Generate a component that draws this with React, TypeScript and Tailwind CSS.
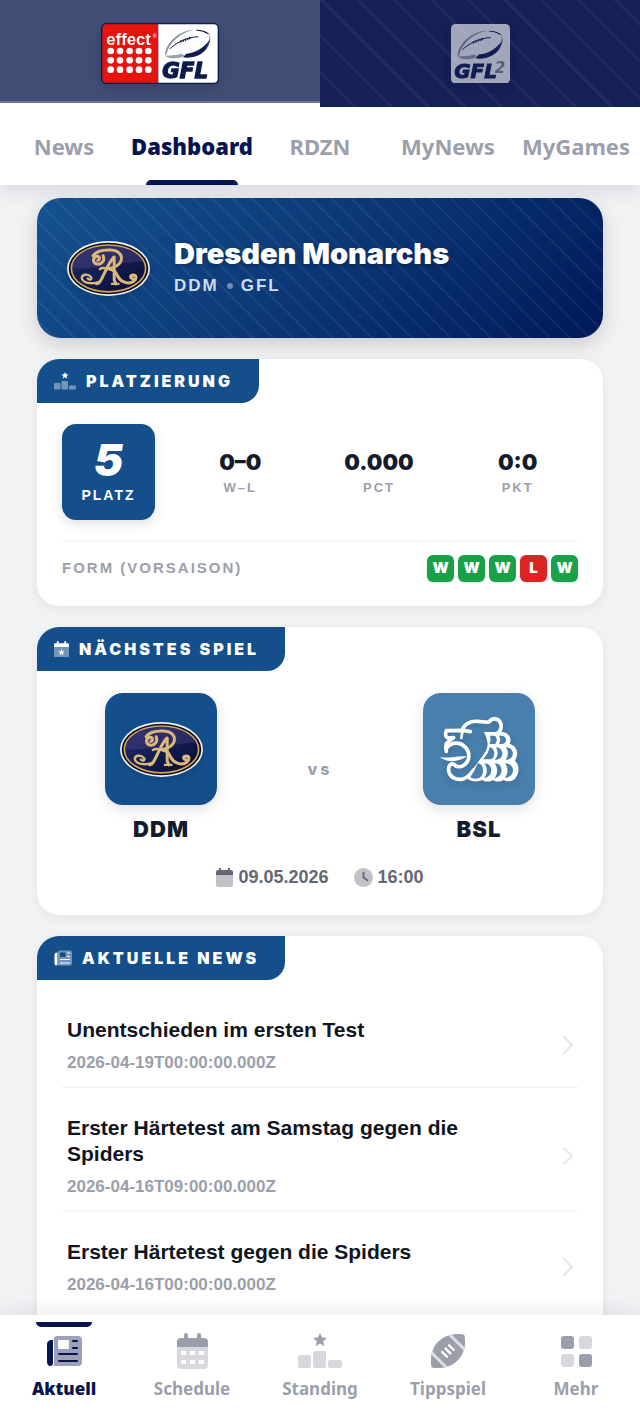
import type { ReactNode } from "react";

const tabs = ["News", "Dashboard", "RDZN", "MyNews", "MyGames"];

const stats = [
  { value: "0–0", label: "W–L" },
  { value: "0.000", label: "PCT" },
  { value: "0:0", label: "PKT" },
];

const form = ["W", "W", "W", "L", "W"];

const news = [
  { title: "Unentschieden im ersten Test", date: "2026-04-19T00:00:00.000Z" },
  { title: "Erster Härtetest am Samstag gegen die Spiders", date: "2026-04-16T09:00:00.000Z" },
  { title: "Erster Härtetest gegen die Spiders", date: "2026-04-16T00:00:00.000Z" },
];

const STAR = "M0 -7 L2 -2.4 L7 -2 L3.2 1.3 L4.4 6.2 L0 3.5 L-4.4 6.2 L-3.2 1.3 L-7 -2 L-2 -2.4 Z";

function PodiumIcon({ className }: { className: string }) {
  return (
    <svg viewBox="0 0 44 36" className={className} fill="currentColor" aria-hidden="true">
      <path d={STAR} transform="translate(22 7)" />
      <g opacity="0.4">
        <rect x="0" y="22" width="13" height="13" rx="2" />
        <rect x="15" y="18" width="13" height="17" rx="2" />
        <rect x="30" y="27" width="14" height="8" rx="2" />
      </g>
    </svg>
  );
}

function NewspaperIcon({ className }: { className: string }) {
  return (
    <svg viewBox="0 0 36 32" className={className} fill="currentColor" aria-hidden="true">
      <path d="M7 5 C2 5 1 7 1 10 V27 C1 32 7 32 7 28 Z" />
      <path
        fillRule="evenodd"
        opacity="0.4"
        d="M11 1 H32 Q36 1 36 5 V27 Q36 31 32 31 H7 Q8 30 8 28 V4 Q8 1 11 1 Z M13 5 Q12 5 12 6 V13 Q12 14 13 14 H22 Q23 14 23 13 V6 Q23 5 22 5 Z"
      />
      <path
        d="M27 6 H31 M27 13 H31 M13 19 H31 M13 26 H31"
        stroke="currentColor"
        strokeWidth="2"
        strokeLinecap="round"
      />
    </svg>
  );
}

function CalendarIcon({ className }: { className: string }) {
  return (
    <svg viewBox="0 0 31 36" className={className} fill="currentColor" aria-hidden="true">
      <path d="M9 0 Q11 0 11 2 V5 H20 V2 Q20 0 22 0 Q24 0 24 2 V5 H27 Q31 5 31 9 V14 H0 V9 Q0 5 4 5 H7 V2 Q7 0 9 0 Z" />
      <path
        fillRule="evenodd"
        opacity="0.4"
        d="M0 14 H31 V32 Q31 36 27 36 H4 Q0 36 0 32 Z M4 18 V22 H9 V18 Z M13 18 V22 H18 V18 Z M22 18 V22 H27 V18 Z M4 27 V31 H9 V27 Z M13 27 V31 H18 V27 Z M22 27 V31 H27 V27 Z"
      />
    </svg>
  );
}

function MatchdayIcon({ className }: { className: string }) {
  return (
    <svg viewBox="0 0 32 36" className={className} fill="currentColor" aria-hidden="true">
      <path d="M8 0 Q10 0 10 2 V5 H22 V2 Q22 0 24 0 Q26 0 26 2 V5 H29 Q32 5 32 8 V13 H0 V8 Q0 5 3 5 H6 V2 Q6 0 8 0 Z" />
      <path opacity="0.4" d="M0 13 H32 V33 Q32 36 29 36 H3 Q0 36 0 33 Z" />
      <path d={STAR} transform="translate(16 24)" />
    </svg>
  );
}

function DateIcon({ className }: { className: string }) {
  return (
    <svg viewBox="0 0 17 19" className={className} fill="currentColor" aria-hidden="true">
      <path d="M3 0 H5 V2 H12 V0 H14 V2 H15 Q17 2 17 4 V7 H0 V4 Q0 2 2 2 H3 Z" />
      <path opacity="0.4" d="M0 7 H17 V17 Q17 19 15 19 H2 Q0 19 0 17 Z" />
    </svg>
  );
}

function ClockIcon({ className }: { className: string }) {
  return (
    <svg viewBox="0 0 20 20" className={className} aria-hidden="true">
      <circle cx="10" cy="10" r="10" fill="currentColor" opacity="0.4" />
      <path d="M10 5 V10 L14 13" fill="none" stroke="currentColor" strokeWidth="2" strokeLinecap="round" />
    </svg>
  );
}

function FootballIcon({ className }: { className: string }) {
  return (
    <svg viewBox="0 0 100 100" className={className} aria-hidden="true">
      <clipPath id="ball">
        <path d="M6 99 Q1 99 1 94 C-4 62 6 36 24 20 C42 3 68 -3 93 1 Q98 1 99 6 C104 38 94 64 76 80 C58 97 32 103 6 99 Z" />
      </clipPath>
      <g clipPath="url(#ball)">
        <rect width="100" height="100" fill="currentColor" />
        <path d="M50 -3 L103 50 M-3 50 L50 103" stroke="#dcdee3" strokeWidth="9" />
      </g>
      <path
        d="M53 33 L67 47 M43 43 L57 57 M33 53 L47 67"
        stroke="white"
        strokeWidth="7"
        strokeLinecap="round"
      />
    </svg>
  );
}

function GridIcon({ className }: { className: string }) {
  return (
    <svg viewBox="0 0 31 31" className={className} fill="currentColor" aria-hidden="true">
      <rect width="13" height="13" rx="3" />
      <rect x="18" y="18" width="13" height="13" rx="3" />
      <g opacity="0.4">
        <rect x="18" width="13" height="13" rx="3" />
        <rect y="18" width="13" height="13" rx="3" />
      </g>
    </svg>
  );
}

function LeagueBall() {
  return (
    <g fill="none">
      <path d="M192 97 C192 60 236 20 282 20 C240 26 202 62 197 94 Z" fill="#8d949f" />
      <path d="M192 98 C208 97 226 97 243 92 L250 98 L242 103 C222 108 202 107 192 98 Z" fill="#9aa1aa" />
      <path d="M246 103 L256 92 C284 90 310 74 328 48 C324 78 302 98 272 103 C262 105 254 105 246 103 Z" fill="#0d1b4f" />
      <path d="M286 20 C304 20 318 25 327 35 L318 32 C308 26 298 23 286 23 Z" fill="#0d1b4f" />
      <path d="M326 38 C328 48 324 60 314 74" stroke="#59627f" strokeWidth="2" />
      <path d="M206 78 C222 62 256 42 292 41" stroke="#0d1b4f" strokeWidth="3" />
      <path d="M238 56 L270 44" stroke="#0d1b4f" strokeWidth="7" strokeDasharray="4 3" />
    </g>
  );
}

function GflLogo() {
  return (
    <svg viewBox="0 0 354 183" className="w-[118px] drop-shadow-lg" role="img" aria-label="effect GFL">
      <rect width="354" height="183" rx="16" fill="#0d1b4f" />
      <path d="M16 4 H172 V179 H16 Q4 179 4 167 V16 Q4 4 16 4 Z" fill="#e6130f" />
      <path d="M172 4 H338 Q350 4 350 16 V167 Q350 179 338 179 H172 Z" fill="white" />
      <text x="16" y="66" fontSize="50" className="font-['Liberation_Sans'] font-bold" fill="white">effect</text>
      <text x="155" y="44" fontSize="15" className="font-['Liberation_Sans']" fill="white">®</text>
      {[84, 112, 140].map((y) =>
        [29, 57, 86, 114, 142].map((x) => <circle key={`${x}-${y}`} cx={x} cy={y} r="10" fill="white" />)
      )}
      <LeagueBall />
      <text
        x="184"
        y="165"
        fontSize="64"
        className="font-['DejaVu_Sans'] font-bold italic"
        fill="#0d1b4f"
        stroke="#0d1b4f"
        strokeWidth="4"
      >
        GFL
      </text>
    </svg>
  );
}

function Gfl2Logo() {
  return (
    <svg viewBox="172 0 178 180" className="w-[59px] opacity-60 drop-shadow-lg" role="img" aria-label="GFL 2">
      <rect x="172" width="178" height="180" rx="14" fill="white" />
      <LeagueBall />
      <text x="304" y="148" fontSize="46" className="font-['DejaVu_Sans'] font-bold italic" fill="#7f8796">2</text>
      <text
        x="182"
        y="163"
        fontSize="60"
        className="font-['DejaVu_Sans'] font-bold italic"
        fill="#0d1b4f"
        stroke="#0d1b4f"
        strokeWidth="3"
      >
        GFL
      </text>
    </svg>
  );
}

function MonarchsCrest() {
  return (
    <svg
      viewBox="0 0 248 164"
      className="w-[83px] shrink-0 overflow-visible drop-shadow-md"
      role="img"
      aria-label="Dresden Monarchs"
    >
      <defs>
        <linearGradient id="crest" x1="0" y1="0" x2="1" y2="1">
          <stop offset="0" stopColor="#1c2a68" />
          <stop offset="0.5" stopColor="#121d52" />
          <stop offset="1" stopColor="#080b2a" />
        </linearGradient>
      </defs>
      <ellipse cx="124" cy="82" rx="124" ry="82" fill="#f4f1ea" />
      <ellipse cx="124" cy="82" rx="119" ry="77" fill="#0b0d20" />
      <ellipse cx="124" cy="82" rx="111" ry="70" fill="url(#crest)" stroke="#cfa35a" strokeWidth="5" />
      <path d="M16 82 C22 36 80 14 124 14 C172 14 214 34 228 62 C170 60 120 84 16 82 Z" fill="#6b4f93" opacity="0.3" />
      <g fill="none" stroke="#d9b87a" strokeLinecap="round" strokeLinejoin="round">
        <path
          strokeWidth="9"
          d="M92 58 C100 56 98 44 88 46 C76 50 76 66 90 69 C104 71 114 58 108 44 M78 44 C88 30 112 26 130 27 C158 28 168 46 160 62 C154 76 138 80 124 82 C142 84 146 94 152 106 C160 122 182 130 196 122 C210 114 208 102 198 102 C188 102 188 112 196 112"
        />
        <path strokeWidth="9" d="M140 48 C126 62 116 88 104 112 C98 124 92 128 88 128 M141 48 V116 L146 128" />
        <path strokeWidth="7" d="M96 122 C76 130 46 126 44 110 C46 98 64 98 72 108 C76 114 68 118 62 112 M98 84 C112 74 128 86 142 90 M134 128 H154" />
      </g>
    </svg>
  );
}

function LionLogo() {
  return (
    <svg viewBox="24 14 240 200" className="w-20 drop-shadow-md" role="img" aria-label="BSL">
      <g fill="none" stroke="white" strokeWidth="11" strokeLinecap="round" strokeLinejoin="round">
        <path d="M93 60 C98 38 118 28 140 30 C154 31 166 34 174 32 C182 18 204 20 209 36 C214 52 206 62 196 68" />
        <path d="M118 61 L96 57 L46 58 C42 68 44 76 50 80 L68 79 L46 96 C43 104 44 110 46 120" />
        <path d="M94 60 L91 80" strokeWidth="8" />
        <path d="M46 112 C58 92 86 90 101 106 C120 124 116 150 98 162 C88 168 76 168 68 158 C56 156 50 168 54 182 C58 198 74 206 92 204 C106 202 116 192 128 176" />
      </g>
      <path d="M26 136 C50 144 76 132 108 135 C84 152 50 156 26 136 Z" fill="white" />

      {/* Mane: one white shape with the scales cut out in the tile colour */}
      <path
        d="M158 62 H212 C232 62 244 80 236 98 C256 102 266 126 252 148 C266 160 266 186 252 202 C242 212 226 212 218 206 C208 212 194 212 186 206 C176 212 162 212 154 206 C142 212 118 214 106 198 C116 188 134 162 152 138 C164 122 174 106 168 88 C166 78 164 70 158 62 Z"
        fill="white"
      />
      <g fill="#487fad">
        <path d="M176 73 H192 C200 82 198 92 192 98 H175 C180 88 180 82 176 73 Z" />
        <path d="M204 73 H214 C228 76 230 94 214 98 H204 C209 88 209 82 204 73 Z" />
        <path d="M175 108 C192 108 196 138 180 144 H156 C168 132 174 120 175 108 Z" />
        <path d="M195 108 C218 108 222 142 198 145 H192 C202 132 202 120 195 108 Z" />
        <path d="M224 108 C252 108 252 142 230 145 H224 C233 132 233 120 224 108 Z" />
        <path d="M140 156 C160 156 162 194 144 200 C134 204 122 202 118 197 C128 184 134 170 140 156 Z" />
        <path d="M160 156 C188 156 188 198 160 200 C170 186 170 170 160 156 Z" />
        <path d="M191 156 C219 156 219 198 191 200 C201 186 201 170 191 156 Z" />
        <path d="M222 156 C254 156 254 198 222 200 C232 186 232 170 222 156 Z" />
      </g>
    </svg>
  );
}

function ChevronIcon() {
  return (
    <svg viewBox="0 0 10 18" className="h-[18px] w-[10px] shrink-0 text-gray-200" aria-hidden="true">
      <path d="M1 1 L9 9 L1 17" fill="none" stroke="currentColor" strokeWidth="2" strokeLinecap="round" strokeLinejoin="round" />
    </svg>
  );
}

function Card({ icon, title, children }: { icon: ReactNode; title: string; children: ReactNode }) {
  return (
    <section className="shrink-0 overflow-hidden rounded-[22px] bg-white shadow-[0_3px_12px_rgba(0,0,0,0.06)]">
      <h2 className="inline-flex h-11 items-center gap-[10px] rounded-br-[18px] bg-[#144f8c] pr-[26px] pl-[17px] align-top font-['Inter'] text-base font-black tracking-[3px] text-white uppercase">
        {icon}
        {title}
      </h2>
      {children}
    </section>
  );
}

const navItems = [
  { label: "Aktuell", icon: <NewspaperIcon className="w-9" />, active: true },
  { label: "Schedule", icon: <CalendarIcon className="h-9" />, active: false },
  { label: "Standing", icon: <PodiumIcon className="w-11" />, active: false },
  { label: "Tippspiel", icon: <FootballIcon className="w-[34px]" />, active: false },
  { label: "Mehr", icon: <GridIcon className="w-[31px]" />, active: false },
];

export default function App() {
  return (
    <div className="flex h-screen flex-col overflow-hidden bg-[#f1f2f4] font-['Liberation_Sans',sans-serif]">
      <header className="relative z-10 shrink-0 bg-white shadow-[0_4px_18px_rgba(13,27,79,0.12)]">
        {/* League switch */}
        <div className="grid h-[107px] grid-cols-2">
          <button className="flex items-center justify-center border-b-4 border-white bg-[#404d75] pt-[3px] shadow-[inset_0_-2px_0_#6b769a]">
            <GflLogo />
          </button>
          <button className="flex items-center justify-center bg-[#142056] bg-[repeating-linear-gradient(45deg,transparent_0_23px,rgba(255,255,255,0.05)_23px_26px)]">
            <Gfl2Logo />
          </button>
        </div>

        <nav className="grid h-[78px] grid-cols-5 font-['Noto_Sans',sans-serif] text-[22px] font-bold">
          {tabs.map((tab) => (
            <a
              key={tab}
              href="#"
              className={
                tab === "Dashboard"
                  ? "relative flex items-center justify-center font-black text-[#07154f]"
                  : "flex items-center justify-center text-[#9b9fab]"
              }
            >
              {tab}
              {tab === "Dashboard" && (
                <span className="absolute bottom-0 h-[5px] w-[92px] rounded-t-md bg-[#07154f]" />
              )}
            </a>
          ))}
        </nav>
      </header>

      <main className="flex min-h-0 flex-1 flex-col gap-[21px] overflow-y-auto px-[37px] pt-[13px] [scrollbar-width:none]">
        {/* Team banner */}
        <section className="flex h-[140px] shrink-0 items-center gap-6 rounded-[24px] bg-[repeating-linear-gradient(45deg,transparent_0_12px,rgba(255,255,255,0.06)_12px_14px),linear-gradient(135deg,#14528f_0%,#0b3776_50%,#001858_100%)] px-[30px] shadow-[0_6px_20px_rgba(0,0,0,0.16)]">
          <MonarchsCrest />
          <div>
            <h1 className="font-['Inter'] text-[29px] leading-9 font-black text-white [text-shadow:0_2px_4px_rgba(0,0,0,0.3)]">
              Dresden Monarchs
            </h1>
            <p className="flex items-center gap-2 text-[17px] leading-7 font-bold tracking-[2px] text-[#cfdcee]">
              DDM <span className="h-[6px] w-[6px] rounded-full bg-[#6f8db8]" /> GFL
            </p>
          </div>
        </section>

        <Card icon={<PodiumIcon className="w-[22px]" />} title="Platzierung">
          <div className="flex items-center gap-4 pt-[21px] pr-4 pb-5 pl-[25px]">
            <div className="flex h-24 w-[93px] flex-col items-center justify-center rounded-[14px] bg-[#144f8c] text-white shadow-[0_4px_12px_rgba(0,0,0,0.12)]">
              <span className="font-['Inter'] text-[44px] leading-[46px] font-black italic">5</span>
              <span className="text-sm leading-6 font-bold tracking-[2px]">PLATZ</span>
            </div>
            <dl className="grid flex-1 grid-cols-3 text-center">
              {stats.map((stat) => (
                <div key={stat.label} className="flex flex-col-reverse">
                  <dt className="text-[13px] leading-5 font-bold tracking-[2px] text-[#9b9fab]">{stat.label}</dt>
                  <dd className="font-['Inter'] text-[22px] leading-8 font-black text-[#141c2c]">{stat.value}</dd>
                </div>
              ))}
            </dl>
          </div>
          <div className="mx-[25px] flex items-center justify-between border-t-2 border-[#f6f6f8] pt-[13px] pb-6">
            <span className="text-[15px] font-bold tracking-[2px] text-[#9b9fab]">FORM (VORSAISON)</span>
            <div className="flex gap-1">
              {form.map((result, i) => (
                <span
                  key={i}
                  className={`flex h-[27px] w-[27px] items-center justify-center rounded-md font-['Inter'] text-[15px] font-black text-white shadow-sm ${
                    result === "W" ? "bg-[#18a149]" : "bg-[#db2424]"
                  }`}
                >
                  {result}
                </span>
              ))}
            </div>
          </div>
        </Card>

        <Card icon={<MatchdayIcon className="w-[15px]" />} title="Nächstes Spiel">
          <div className="flex items-center justify-between px-[68px] pt-[22px]">
            <div className="flex flex-col items-center gap-2">
              <div className="flex h-28 w-28 items-center justify-center rounded-[18px] bg-[#144f8c] shadow-[0_4px_14px_rgba(0,0,0,0.12)]">
                <MonarchsCrest />
              </div>
              <span className="font-['Inter'] text-[22px] leading-8 font-black tracking-[1px] text-[#141c2c]">DDM</span>
            </div>
            <span className="font-['Inter'] text-base font-extrabold tracking-[3px] text-[#9b9fab]">vs</span>
            <div className="flex flex-col items-center gap-2">
              <div className="flex h-28 w-28 items-center justify-center rounded-[18px] bg-[#487fad] shadow-[0_4px_14px_rgba(0,0,0,0.12)]">
                <LionLogo />
              </div>
              <span className="font-['Inter'] text-[22px] leading-8 font-black tracking-[1px] text-[#141c2c]">BSL</span>
            </div>
          </div>
          <div className="flex justify-center gap-[25px] pt-[18px] pb-6 text-lg leading-7 font-bold text-[#646775]">
            <span className="flex items-center gap-[5px]">
              <DateIcon className="w-[17px]" />
              09.05.2026
            </span>
            <span className="flex items-center gap-[5px]">
              <ClockIcon className="w-[19px]" />
              16:00
            </span>
          </div>
        </Card>

        <Card icon={<NewspaperIcon className="w-[18px]" />} title="Aktuelle News">
          <ul className="px-[25px] pt-[10px] pb-8">
            {news.map((item) => (
              <li key={item.title} className="border-b-2 border-[#f6f6f8] last:border-b-0">
                <a href="#" className="flex items-center gap-4 px-[5px] pt-[27px] pb-[13px]">
                  <div className="w-[420px] max-w-full">
                    <h3 className="text-[21px] leading-[26px] font-bold text-[#10151f]">{item.title}</h3>
                    <p className="pt-[10px] text-[17px] leading-5 font-bold text-[#9b9fab]">{item.date}</p>
                  </div>
                  <span className="flex-1" />
                  <ChevronIcon />
                </a>
              </li>
            ))}
          </ul>
        </Card>
      </main>

      <nav className="relative z-10 grid h-[107px] shrink-0 grid-cols-5 bg-white font-['Noto_Sans',sans-serif] text-[17px] font-bold shadow-[0_-4px_18px_rgba(13,27,79,0.08)]">
        {navItems.map((item) => (
          <a
            key={item.label}
            href="#"
            className={
              item.active
                ? "relative flex flex-col items-center pt-4 font-black text-[#07154f]"
                : "relative flex flex-col items-center pt-4 text-[#9b9fab]"
            }
          >
            {item.active && <span className="absolute top-[7px] h-[5px] w-14 rounded-b-md bg-[#07154f]" />}
            <span className="flex h-10 items-center">{item.icon}</span>
            <span className="pt-[6px] leading-6">{item.label}</span>
          </a>
        ))}
      </nav>
    </div>
  );
}
